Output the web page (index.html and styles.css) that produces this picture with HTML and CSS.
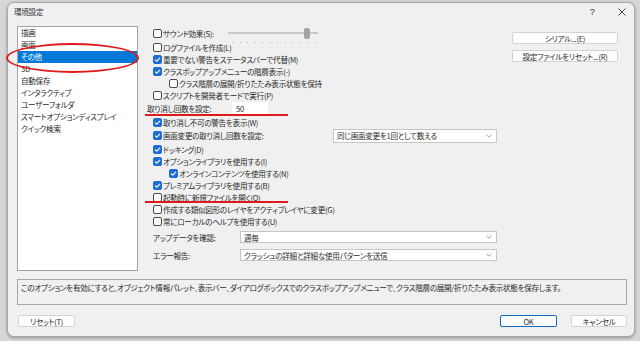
FILE: index.html
```html
<!DOCTYPE html>
<html lang="ja">
<head>
<meta charset="utf-8">
<link rel="stylesheet" href="styles.css">
</head>
<body>
<div class="page">
  <div class="window">
    <div class="titlebar">
      <span class="title">環境設定</span>
      <span class="help">?</span>
      <span class="close"><svg viewBox="0 0 8 8" width="8" height="8"><path d="M0.5 0.5L7.5 7.5M7.5 0.5L0.5 7.5" stroke="#333" stroke-width="0.9" fill="none"/></svg></span>
    </div>
    <div class="main">
      <ul class="cats">
        <li>描画</li>
        <li>画面</li>
        <li class="sel">その他</li>
        <li>3D</li>
        <li>自動保存</li>
        <li>インタラクティブ</li>
        <li>ユーザーフォルダ</li>
        <li>スマートオプションディスプレイ</li>
        <li>クイック検索</li>
      </ul>
      <div class="opts">
        <div class="row r-sound">
          <span class="cb"></span><span class="lbl w-sound">サウンド効果(S):</span>
          <div class="slider">
            <div class="track"><span class="thumb"></span></div>
            <div class="ticks"><i></i><i></i><i></i><i></i><i></i><i></i><i></i><i></i><i></i><i></i><i></i><i></i></div>
          </div>
        </div>
        <div class="row"><span class="cb"></span><span class="lbl">ログファイルを作成(L)</span></div>
        <div class="row"><span class="cb on"><svg viewBox="0 0 9 9"><path d="M2 4.6L3.7 6.2L7 2.8" stroke="#fff" stroke-width="1.1" fill="none"/></svg></span><span class="lbl">重要でない警告をステータスバーで代替(M)</span></div>
        <div class="row"><span class="cb on"><svg viewBox="0 0 9 9"><path d="M2 4.6L3.7 6.2L7 2.8" stroke="#fff" stroke-width="1.1" fill="none"/></svg></span><span class="lbl">クラスポップアップメニューの階層表示(-)</span></div>
        <div class="row ind"><span class="cb"></span><span class="lbl">クラス階層の展開/折りたたみ表示状態を保持</span></div>
        <div class="row"><span class="cb"></span><span class="lbl">スクリプトを開発者モードで実行(P)</span></div>
        <div class="row tall"><span class="lbl w-undo">取り消し回数を設定:</span><span class="num">50</span></div>
        <div class="row"><span class="cb on"><svg viewBox="0 0 9 9"><path d="M2 4.6L3.7 6.2L7 2.8" stroke="#fff" stroke-width="1.1" fill="none"/></svg></span><span class="lbl">取り消し不可の警告を表示(W)</span></div>
        <div class="row tall"><span class="cb on"><svg viewBox="0 0 9 9"><path d="M2 4.6L3.7 6.2L7 2.8" stroke="#fff" stroke-width="1.1" fill="none"/></svg></span><span class="lbl">画面変更の取り消し回数を設定:</span>
          <div class="select s-right"><span>同じ画面変更を1回として数える</span><svg class="chev" viewBox="0 0 6 4" width="6" height="4"><path d="M0.5 0.8L3 3.2L5.5 0.8" stroke="#8a8a8a" stroke-width="0.8" fill="none"/></svg></div>
        </div>
        <div class="row"><span class="cb on"><svg viewBox="0 0 9 9"><path d="M2 4.6L3.7 6.2L7 2.8" stroke="#fff" stroke-width="1.1" fill="none"/></svg></span><span class="lbl">ドッキング(D)</span></div>
        <div class="row"><span class="cb on"><svg viewBox="0 0 9 9"><path d="M2 4.6L3.7 6.2L7 2.8" stroke="#fff" stroke-width="1.1" fill="none"/></svg></span><span class="lbl">オプションライブラリを使用する(I)</span></div>
        <div class="row ind"><span class="cb on"><svg viewBox="0 0 9 9"><path d="M2 4.6L3.7 6.2L7 2.8" stroke="#fff" stroke-width="1.1" fill="none"/></svg></span><span class="lbl">オンラインコンテンツを使用する(N)</span></div>
        <div class="row"><span class="cb on"><svg viewBox="0 0 9 9"><path d="M2 4.6L3.7 6.2L7 2.8" stroke="#fff" stroke-width="1.1" fill="none"/></svg></span><span class="lbl">プレミアムライブラリを使用する(B)</span></div>
        <div class="row"><span class="cb"></span><span class="lbl">起動時に新規ファイルを開く(O)</span></div>
        <div class="row"><span class="cb"></span><span class="lbl">作成する類似図形のレイヤをアクティブレイヤに変更(G)</span></div>
        <div class="row"><span class="cb"></span><span class="lbl">常にローカルのヘルプを使用する(U)</span></div>
        <div class="row drop"><span class="lbl w-drop">アップデータを確認:</span>
          <div class="select s-fill"><span>週毎</span><svg class="chev" viewBox="0 0 6 4" width="6" height="4"><path d="M0.5 0.8L3 3.2L5.5 0.8" stroke="#8a8a8a" stroke-width="0.8" fill="none"/></svg></div>
        </div>
        <div class="row drop"><span class="lbl w-drop">エラー報告:</span>
          <div class="select s-fill"><span>クラッシュの詳細と詳細な使用パターンを送信</span><svg class="chev" viewBox="0 0 6 4" width="6" height="4"><path d="M0.5 0.8L3 3.2L5.5 0.8" stroke="#8a8a8a" stroke-width="0.8" fill="none"/></svg></div>
        </div>
      </div>
      <div class="side">
        <div class="btn">シリアル...(E)</div>
        <div class="btn">設定ファイルをリセット...(R)</div>
      </div>
    </div>
    <div class="desc">このオプションを有効にすると、オブジェクト情報パレット、表示バー、ダイアログボックスでのクラスポップアップメニューで、クラス階層の展開/折りたたみ表示状態を保存します。</div>
    <div class="footer">
      <div class="btn b-reset">リセット(T)</div>
      <div class="btn b-ok">OK</div>
      <div class="btn b-cancel">キャンセル</div>
    </div>
    <div class="mark-ellipse"></div>
    <div class="mark-line l1"></div>
    <div class="mark-line l2"></div>
  </div>
</div>
</body>
</html>
```

FILE: styles.css
```css
html, body {
  margin: 0;
  padding: 0;
}
body {
  width: 640px;
  height: 341px;
  overflow: hidden;
  background: #d6d6d6;
  font-family: "Noto Sans CJK JP", "Noto Sans", sans-serif;
  font-size: 7.6px;
  letter-spacing: -0.3px;
  font-feature-settings: "palt";
  color: #2a2a2a;
}
.page {
  padding: 2px 5px 0 7px;
}
.window {
  position: relative;
  height: 335px;
  box-sizing: border-box;
  background: #f0f0f0;
  border: 1px solid #a9a9a9;
  border-radius: 7px;
  box-shadow: 0 1px 3px rgba(0, 0, 0, 0.35);
  display: flex;
  flex-direction: column;
}
.titlebar {
  height: 23px;
  display: flex;
  align-items: flex-start;
  line-height: 18px;
  padding-left: 6px;
  color: #333;
}
.title {
  flex: 1;
}
.help {
  width: 6px;
  text-align: center;
  font-family: "Liberation Sans", sans-serif;
  font-size: 9px;
  margin-right: 23px;
}
.close {
  width: 8px;
  height: 18px;
  display: flex;
  align-items: center;
  margin-right: 8px;
}
.main {
  display: flex;
  height: 245px;
  padding-left: 9px;
}
.cats {
  width: 121px;
  box-sizing: border-box;
  margin: 0;
  padding: 0;
  list-style: none;
  border: 1px solid #a3a3a3;
  background: #fff;
}
.cats li {
  height: 12px;
  line-height: 12px;
  padding-left: 3px;
  white-space: nowrap;
}
.cats li.sel {
  background: #0078d7;
  color: #fff;
}
.opts {
  flex: 1;
  margin-left: 14px;
  padding-top: 1px;
  display: flex;
  flex-direction: column;
}
.row {
  display: flex;
  align-items: center;
  height: 12px;
  padding-left: 1px;
  white-space: nowrap;
}
.row.r-sound {
  height: 14px;
  align-items: flex-start;
}
.row.r-sound .cb {
  margin-top: 2px;
}
.row.r-sound .lbl {
  line-height: 14px;
}
.row.tall {
  height: 15px;
}
.row.ind {
  padding-left: 17px;
}
.row.drop {
  height: 16px;
  margin-top: 2px;
}
.cb {
  flex: none;
  width: 9px;
  height: 9px;
  box-sizing: border-box;
  border: 1px solid #4a4a4a;
  border-radius: 2px;
  background: #fbfbfb;
  margin-right: 1px;
  display: flex;
}
.cb svg {
  margin: -1px;
  width: 9px;
  height: 9px;
}
.cb.on {
  background: #1a6fd1;
  border-color: #1a6fd1;
}
.w-sound {
  width: 65px;
}
.slider {
  width: 90px;
  height: 18px;
  display: flex;
  flex-direction: column;
}
.track {
  height: 12px;
  display: flex;
  align-items: center;
  background: linear-gradient(#c9c9c9, #c9c9c9) no-repeat 0 5px / 100% 2px;
}
.thumb {
  width: 6px;
  height: 11px;
  margin-left: 76px;
  border-radius: 2px;
  background: #a4a4a4;
}
.ticks {
  margin-top: 3px;
  padding: 0 2px 0 4px;
  display: flex;
  justify-content: space-between;
}
.ticks i {
  width: 1px;
  height: 1px;
  background: #b3b3b3;
}
.w-undo {
  margin-left: -6px;
  width: 85px;
}
.num {
  width: 36px;
  height: 13px;
  box-sizing: border-box;
  background: #fff;
  padding-left: 4px;
  line-height: 13px;
}
.select {
  box-sizing: border-box;
  border: 1px solid #c6c6c6;
  background: #fff;
  display: flex;
  align-items: center;
  padding-left: 3px;
  margin-right: 1px;
}
.chev {
  margin-left: auto;
  margin-right: 4px;
}
.s-right {
  margin-left: auto;
  width: 164px;
  height: 14px;
}
.s-fill {
  flex: 1;
  height: 12px;
}
.w-drop {
  width: 87px;
}
.side {
  width: 106px;
  margin-left: 14px;
  margin-right: 16px;
  padding-top: 6px;
  display: flex;
  flex-direction: column;
  gap: 6px;
}
.btn {
  height: 12px;
  box-sizing: border-box;
  background: #fdfdfd;
  border: 1px solid #d3d3d3;
  border-radius: 2px;
  display: flex;
  align-items: center;
  justify-content: center;
  white-space: nowrap;
}
.desc {
  margin: 8px 7px 0 9px;
  height: 26px;
  box-sizing: border-box;
  border: 1px solid #a9a9a9;
  padding: 2px 0 0 3px;
  line-height: 12px;
  white-space: nowrap;
}
.footer {
  display: flex;
  margin: 10px 7px 0 10px;
}
.b-reset {
  width: 57px;
}
.b-ok {
  width: 57px;
  margin-left: auto;
  border-color: #1067c4;
}
.b-cancel {
  width: 56px;
  margin-left: 14px;
}
.mark-ellipse {
  position: absolute;
  left: -2px;
  top: 40px;
  width: 133px;
  height: 30px;
  box-sizing: border-box;
  border: 2px solid #e0191c;
  border-radius: 50%;
}
.mark-line {
  position: absolute;
  left: 137px;
  width: 143px;
  height: 2px;
  background: #e0191c;
}
.l1 {
  top: 111px;
}
.l2 {
  top: 198px;
}
```
